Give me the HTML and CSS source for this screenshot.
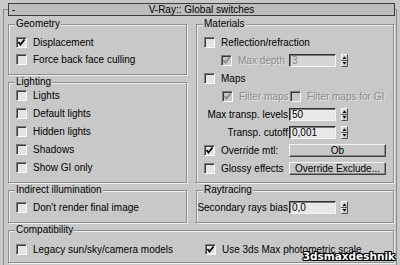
FILE: index.html
```html
<!DOCTYPE html>
<html>
<head>
    <title>V-Ray:: Global switches</title>
    <link rel="stylesheet" href="styles.css">
</head>
<body>
    <div class="rollout">
        <div class="title">
            <span class="minus">-</span>
            <span class="caption">V-Ray:: Global switches</span>
            <span class="spacer"></span>
        </div>

        <div class="grid">
            <div class="col">
                <div class="group geometry">
                    <div class="group-title">Geometry</div>
                    <div class="rows">
                        <div class="row"><span class="check on"><svg viewBox="0 0 11 11"><path d="M2.5 5 L4.5 7.5 L8.5 2.5"/></svg></span>Displacement</div>
                        <div class="row"><span class="check"></span>Force back face culling</div>
                    </div>
                </div>

                <div class="group lighting">
                    <div class="group-title">Lighting</div>
                    <div class="rows">
                        <div class="row"><span class="check"></span>Lights</div>
                        <div class="row"><span class="check"></span>Default lights</div>
                        <div class="row"><span class="check"></span>Hidden lights</div>
                        <div class="row"><span class="check"></span>Shadows</div>
                        <div class="row"><span class="check"></span>Show GI only</div>
                    </div>
                </div>
            </div>

            <div class="group materials">
                <div class="group-title">Materials</div>
                <div class="rows">
                    <div class="row"><span class="check"></span>Reflection/refraction</div>
                    <div class="row indent">
                        <span class="check on off"><svg viewBox="0 0 11 11"><path d="M2.5 5 L4.5 7.5 L8.5 2.5"/></svg></span>
                        <span class="muted label-depth">Max depth</span>
                        <span class="field off">3</span>
                        <svg class="spin" viewBox="0 0 7 13"><path class="spin-bg" d="M0 0 H7 V13 H0 Z"/><path class="spin-lt" d="M0.5 12.5 V0.5 H6.5"/><path class="spin-dk" d="M6.5 0.5 V12.5 H0.5 M0 6.5 H7"/><path class="spin-ar" d="M1.5 5 H5.5 L3.5 2.5 Z M1.5 8 H5.5 L3.5 10.5 Z"/></svg>
                    </div>
                    <div class="row"><span class="check"></span>Maps</div>
                    <div class="row indent-maps">
                        <span class="check on off"><svg viewBox="0 0 11 11"><path d="M2.5 5 L4.5 7.5 L8.5 2.5"/></svg></span>
                        <span class="muted label-filter">Filter maps</span>
                        <span class="check off"></span>
                        <span class="muted">Filter maps for GI</span>
                    </div>
                    <div class="row">
                        <span class="field-label">Max transp. levels</span>
                        <span class="field">50</span>
                        <svg class="spin" viewBox="0 0 7 13"><path class="spin-bg" d="M0 0 H7 V13 H0 Z"/><path class="spin-lt" d="M0.5 12.5 V0.5 H6.5"/><path class="spin-dk" d="M6.5 0.5 V12.5 H0.5 M0 6.5 H7"/><path class="spin-ar" d="M1.5 5 H5.5 L3.5 2.5 Z M1.5 8 H5.5 L3.5 10.5 Z"/></svg>
                    </div>
                    <div class="row">
                        <span class="field-label">Transp. cutoff</span>
                        <span class="field">0,001</span>
                        <svg class="spin" viewBox="0 0 7 13"><path class="spin-bg" d="M0 0 H7 V13 H0 Z"/><path class="spin-lt" d="M0.5 12.5 V0.5 H6.5"/><path class="spin-dk" d="M6.5 0.5 V12.5 H0.5 M0 6.5 H7"/><path class="spin-ar" d="M1.5 5 H5.5 L3.5 2.5 Z M1.5 8 H5.5 L3.5 10.5 Z"/></svg>
                    </div>
                    <div class="row">
                        <span class="check on"><svg viewBox="0 0 11 11"><path d="M2.5 5 L4.5 7.5 L8.5 2.5"/></svg></span>
                        <span class="label-override">Override mtl:</span>
                        <span class="button">Ob</span>
                    </div>
                    <div class="row">
                        <span class="check"></span>
                        <span class="label-override">Glossy effects</span>
                        <span class="button">Override Exclude...</span>
                    </div>
                </div>
            </div>

            <div class="group indirect">
                <div class="group-title">Indirect illumination</div>
                <div class="rows">
                    <div class="row"><span class="check"></span>Don't render final image</div>
                </div>
            </div>

            <div class="group raytracing">
                <div class="group-title">Raytracing</div>
                <div class="rows">
                    <div class="row">
                        <span class="field-label wide">Secondary rays bias</span>
                        <span class="field">0,0</span>
                        <svg class="spin" viewBox="0 0 7 13"><path class="spin-bg" d="M0 0 H7 V13 H0 Z"/><path class="spin-lt" d="M0.5 12.5 V0.5 H6.5"/><path class="spin-dk" d="M6.5 0.5 V12.5 H0.5 M0 6.5 H7"/><path class="spin-ar" d="M1.5 5 H5.5 L3.5 2.5 Z M1.5 8 H5.5 L3.5 10.5 Z"/></svg>
                    </div>
                </div>
            </div>

            <div class="group compat">
                <div class="group-title">Compatibility</div>
                <div class="rows">
                    <div class="row">
                        <span class="compat-left"><span class="check"></span>Legacy sun/sky/camera models</span>
                        <span class="check on"><svg viewBox="0 0 11 11"><path d="M2.5 5 L4.5 7.5 L8.5 2.5"/></svg></span>Use 3ds Max photometric scale
                    </div>
                </div>
            </div>
        </div>
    </div>

    <div class="watermark">3dsmaxdeshnik</div>
</body>
</html>
```

FILE: styles.css
```css
body {
    margin: 0;
    width: 400px;
    height: 265px;
    overflow: hidden;
    position: relative;
    background-color: #c8c8c8;
    font-family: "Liberation Sans", Arial, sans-serif;
    font-size: 10px;
    color: #000;
}

/* outer rollout frame */
.rollout {
    margin: 9px 3px 0;
    height: 256px;
    box-sizing: border-box;
    border: 1px solid #8a8a8a;
    border-bottom: none;
    padding: 0 2px 0 4px;
}

.title {
    display: flex;
    height: 13px;
    box-sizing: border-box;
    margin: -7px -1px 0 0;
    border: 1px solid #3c3c3c;
    background-color: #bdbdbd;
    line-height: 11px;
}

.minus {
    width: 20px;
    padding-left: 3px;
    box-sizing: border-box;
}

.caption {
    flex: 1;
    text-align: center;
}

.spacer {
    width: 20px;
}

.grid {
    display: grid;
    grid-template-columns: 179px 198px;
    grid-template-rows: 159px 33px 33px;
    column-gap: 9px;
    row-gap: 7px;
    margin-top: 8px;
}

.col {
    display: flex;
    flex-direction: column;
    gap: 7px;
}

/* etched group box */
.group {
    box-sizing: border-box;
    border: 1px solid #8c8c8c;
    box-shadow: 1px 1px 0 #efefef, inset 1px 1px 0 #efefef;
    padding: 0 6px 0 7px;
}

.group-title {
    width: fit-content;
    margin: -7px 0 0 -1px;
    padding: 0 1px;
    line-height: 12px;
    background-color: #c8c8c8;
}

.geometry {
    height: 51px;
}

.lighting {
    flex: 1;
}

.compat {
    grid-column: 1 / 3;
}

.rows {
    margin-top: 3px;
}

.geometry .rows {
    margin-top: 4px;
}

.lighting .rows {
    margin-top: -2px;
}

.indirect .rows,
.raytracing .rows {
    margin-top: 2px;
}

.compat .rows {
    margin-top: 4px;
}

.row {
    display: flex;
    align-items: center;
    height: 18px;
    white-space: nowrap;
}

.geometry .row {
    height: 17px;
}

/* sunken checkbox */
.check {
    flex: none;
    width: 11px;
    height: 11px;
    box-sizing: border-box;
    margin-right: 6px;
    border: 1px solid;
    border-color: #7a7a7a #fafafa #fafafa #7a7a7a;
    box-shadow: inset 1px 1px 0 #3a3a3a;
    background-color: #e4e4e4;
}

.check svg {
    display: block;
    width: 11px;
    height: 11px;
    margin: -1px 0 0 -1px;
}

.check path {
    fill: none;
    stroke: #000;
    stroke-width: 1.8;
}

.check.off {
    background-color: #c8c8c8;
}

.check.off path {
    stroke: #8a8a8a;
}

.muted {
    color: #8a8a8a;
    text-shadow: 1px 1px 0 #e6e6e6;
}

.indent {
    padding-left: 17px;
}

.indent-maps {
    padding-left: 18px;
}

.label-depth {
    width: 51px;
}

.label-filter {
    width: 51px;
}

.field-label {
    width: 84px;
    text-align: right;
}

.field-label.wide {
    width: 91px;
    margin-left: -7px;
}

/* spinner edit box */
.field {
    width: 47px;
    height: 13px;
    box-sizing: border-box;
    margin-left: 1px;
    padding-left: 2px;
    border: 1px solid;
    border-color: #303030 #f4f4f4 #f4f4f4 #303030;
    box-shadow: inset 1px 1px 0 #7a7a7a;
    background-color: #e8e8e8;
    line-height: 11px;
}

.label-depth + .field,
.field.off {
    margin-left: 0;
}

.field.off {
    color: #8a8a8a;
    background-color: #d6d6d6;
}

.spin {
    width: 7px;
    height: 13px;
    margin-left: 5px;
}

.spin-bg {
    fill: #cfcfcf;
}

.spin-lt {
    fill: none;
    stroke: #fff;
}

.spin-dk {
    fill: none;
    stroke: #505050;
}

.spin-ar {
    fill: #000;
}

.label-override {
    width: 68px;
}

.button {
    width: 97px;
    height: 13px;
    box-sizing: border-box;
    border: 1px solid;
    border-color: #f4f4f4 #404040 #404040 #f4f4f4;
    box-shadow: inset -1px -1px 0 #8a8a8a;
    background-color: #c8c8c8;
    text-align: center;
    line-height: 11px;
}

.compat-left {
    display: flex;
    align-items: center;
    width: 189px;
}

.watermark {
    position: absolute;
    right: 5px;
    bottom: 3px;
    font-family: "DejaVu Sans", Verdana, sans-serif;
    font-size: 10.5px;
    font-weight: bold;
    color: #fff;
    text-shadow: 1px 0 0 #000, -1px 0 0 #000, 0 1px 0 #000, 0 -1px 0 #000, 1px 1px 0 #000, -1px -1px 0 #000, 1px -1px 0 #000, -1px 1px 0 #000;
}
```
